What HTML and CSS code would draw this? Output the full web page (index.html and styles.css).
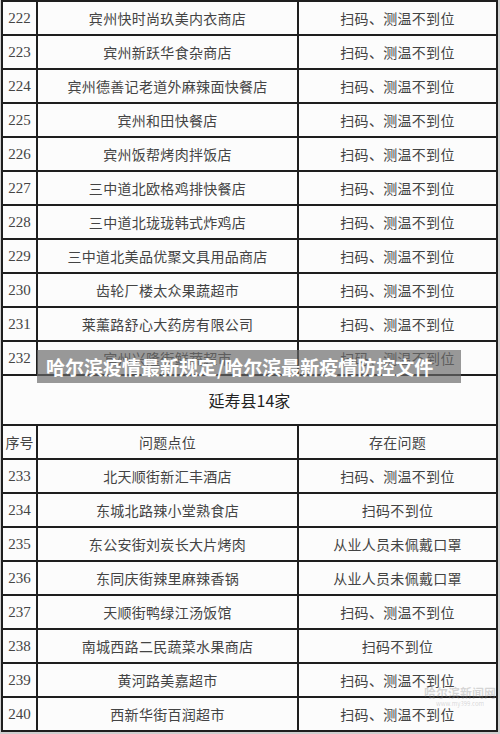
FILE: index.html
```html
<!DOCTYPE html>
<html lang="zh">
<head>
<meta charset="utf-8">
<link rel="stylesheet" href="styles.css">
</head>
<body>
<div class="page">
  <div class="sheet">
    <div class="row"><div class="c num">222</div><div class="c name">宾州快时尚玖美内衣商店</div><div class="c issue">扫码、测温不到位</div></div>
    <div class="row"><div class="c num">223</div><div class="c name">宾州新跃华食杂商店</div><div class="c issue">扫码、测温不到位</div></div>
    <div class="row"><div class="c num">224</div><div class="c name">宾州德善记老道外麻辣面快餐店</div><div class="c issue">扫码、测温不到位</div></div>
    <div class="row"><div class="c num">225</div><div class="c name">宾州和田快餐店</div><div class="c issue">扫码、测温不到位</div></div>
    <div class="row"><div class="c num">226</div><div class="c name">宾州饭帮烤肉拌饭店</div><div class="c issue">扫码、测温不到位</div></div>
    <div class="row"><div class="c num">227</div><div class="c name">三中道北欧格鸡排快餐店</div><div class="c issue">扫码、测温不到位</div></div>
    <div class="row"><div class="c num">228</div><div class="c name">三中道北珑珑韩式炸鸡店</div><div class="c issue">扫码、测温不到位</div></div>
    <div class="row"><div class="c num">229</div><div class="c name">三中道北美品优聚文具用品商店</div><div class="c issue">扫码、测温不到位</div></div>
    <div class="row"><div class="c num">230</div><div class="c name">齿轮厂楼太众果蔬超市</div><div class="c issue">扫码、测温不到位</div></div>
    <div class="row"><div class="c num">231</div><div class="c name">莱薰路舒心大药房有限公司</div><div class="c issue">扫码、测温不到位</div></div>
    <div class="row"><div class="c num">232</div><div class="c name">宾州兴隆街鲜蔬超市</div><div class="c issue">扫码、测温不到位</div></div>
    <div class="row section"><div class="c title">延寿县14家</div></div>
    <div class="row"><div class="c num head">序号</div><div class="c name">问题点位</div><div class="c issue">存在问题</div></div>
    <div class="row"><div class="c num">233</div><div class="c name">北天顺街新汇丰酒店</div><div class="c issue">扫码、测温不到位</div></div>
    <div class="row"><div class="c num">234</div><div class="c name">东城北路辣小堂熟食店</div><div class="c issue">扫码不到位</div></div>
    <div class="row"><div class="c num">235</div><div class="c name">东公安街刘炭长大片烤肉</div><div class="c issue">从业人员未佩戴口罩</div></div>
    <div class="row"><div class="c num">236</div><div class="c name">东同庆街辣里麻辣香锅</div><div class="c issue">从业人员未佩戴口罩</div></div>
    <div class="row"><div class="c num">237</div><div class="c name">天顺街鸭绿江汤饭馆</div><div class="c issue">扫码、测温不到位</div></div>
    <div class="row"><div class="c num">238</div><div class="c name">南城西路二民蔬菜水果商店</div><div class="c issue">扫码不到位</div></div>
    <div class="row"><div class="c num">239</div><div class="c name">黄河路美嘉超市</div><div class="c issue">扫码、测温不到位</div></div>
    <div class="row"><div class="c num">240</div><div class="c name">西新华街百润超市</div><div class="c issue">扫码、测温不到位</div></div>
  </div>
  <div class="banner">哈尔滨疫情最新规定/哈尔滨最新疫情防控文件</div>
  <div class="watermark"><span class="wm-main">哈尔滨新闻网</span><span class="wm-sub">www.my399.com</span></div>
</div>
</body>
</html>
```

FILE: styles.css
```css
html, body {
  margin: 0;
  padding: 0;
}
body {
  background: #cfcfcf;
  width: 500px;
  height: 734px;
  overflow: hidden;
  -webkit-font-smoothing: antialiased;
}
.page {
  position: relative;
  width: 500px;
  height: 734px;
}
.sheet {
  margin-left: 1px;
  width: 493px;
  border: 2px solid #1e1e1e;
  border-bottom: none;
  background: #fcfcfc;
  font-family: "Noto Sans CJK SC", "Liberation Serif", serif;
  color: #444;
}
.row {
  display: grid;
  grid-template-columns: 35px 261px 1fr;
  height: 34px;
  box-sizing: border-box;
  border-bottom: 2px solid #1e1e1e;
}
.c {
  display: flex;
  align-items: center;
  justify-content: center;
  font-size: 14px;
  letter-spacing: 0.3px;
  font-weight: 400;
  white-space: nowrap;
}
.num {
  border-right: 2px solid #1e1e1e;
  font-family: "Liberation Serif", serif;
  font-size: 15px;
  letter-spacing: 0;
  color: #444;
}
.num.head {
  font-family: "Noto Sans CJK SC", sans-serif;
  font-size: 14px;
  letter-spacing: 0;
}
.name {
  border-right: 2px solid #1e1e1e;
}
.issue {
  color: #444;
  font-family: "Noto Sans CJK SC", sans-serif;
}
.row.section {
  display: flex;
  height: 50px;
}
.title {
  flex: 1;
  font-size: 16px;
  color: #222;
  letter-spacing: 0;
  font-family: "Noto Sans CJK SC", sans-serif;
}
.banner {
  position: absolute;
  left: 37px;
  top: 350px;
  width: 415px;
  height: 33px;
  padding-left: 9px;
  background: rgba(105, 105, 105, 0.68);
  color: #fff;
  font-family: "Noto Sans CJK SC", sans-serif;
  font-weight: 700;
  font-size: 19px;
  line-height: 33px;
  white-space: nowrap;
}
.watermark {
  position: absolute;
  left: 424px;
  top: 686px;
  display: flex;
  flex-direction: column;
  align-items: center;
  color: rgba(140, 140, 140, 0.35);
  font-family: "Noto Sans CJK SC", sans-serif;
}
.wm-main {
  font-size: 12px;
  line-height: 14px;
  font-weight: 700;
}
.wm-sub {
  font-size: 6px;
  line-height: 7px;
}
```
